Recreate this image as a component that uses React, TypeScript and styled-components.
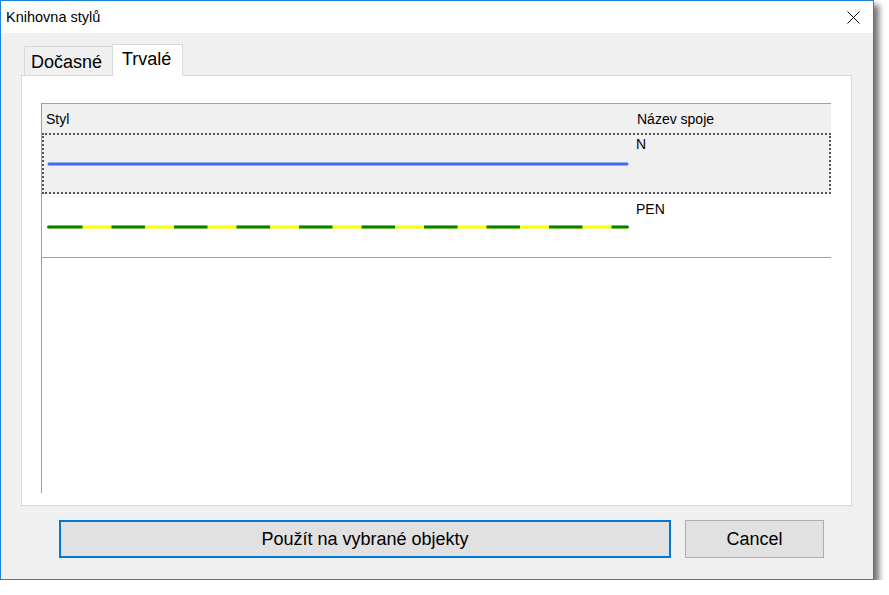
import React from "react";
import styled, { createGlobalStyle } from "styled-components";

const Global = createGlobalStyle`
  html, body { margin: 0; padding: 0; background: #ffffff; }
  body { font-family: "Liberation Sans", Arial, sans-serif; color: #000; }
  * { box-sizing: border-box; }
`;

const Window = styled.div`
  width: 874px;
  height: 580px;
  border: 1px solid #1c84d8;
  display: flex;
  flex-direction: column;
  background: #f0f0f0;
  box-shadow: 5px 5px 6px rgba(0, 0, 0, 0.55);
`;

const TitleBar = styled.div`
  height: 32px;
  background: #ffffff;
  display: flex;
  align-items: center;
  justify-content: space-between;
  padding-left: 5px;
`;

const Title = styled.span`
  font-size: 14.5px;
  color: #000;
  margin-top: -1px;
`;

const CloseButton = styled.div`
  width: 40px;
  height: 32px;
  display: flex;
  align-items: center;
  justify-content: center;
`;

const Body = styled.div`
  flex: 1;
  display: flex;
  flex-direction: column;
  padding: 11px 21px 0 20px;
`;

const TabStrip = styled.div`
  display: flex;
  align-items: flex-end;
  padding-left: 3px;
  height: 31px;
  position: relative;
  z-index: 1;
`;

const Tab = styled.div<{ $active?: boolean; $w: number }>`
  width: ${(p) => p.$w}px;
  font-size: 18px;
  display: flex;
  align-items: center;
  border: 1px solid #d9d9d9;
  border-bottom: none;
  background: ${(p) => (p.$active ? "#ffffff" : "#f0f0f0")};
  height: ${(p) => (p.$active ? "32px" : "29px")};
  margin-bottom: ${(p) => (p.$active ? "-1px" : "0")};
  padding: ${(p) => (p.$active ? "0 0 3px 9px" : "2px 0 0 6px")};
  ${(p) => (p.$active ? "" : "border-right: none;")}
`;

const Panel = styled.div`
  width: 831px;
  height: 431px;
  background: #ffffff;
  border: 1px solid #d9d9d9;
  padding: 27px 20px 12px 19px;
`;

const List = styled.div`
  width: 790px;
  height: 390px;
  border-top: 1px solid #a0a0a0;
  border-left: 1px solid #a0a0a0;
  display: flex;
  flex-direction: column;
`;

const Header = styled.div`
  height: 29px;
  background: #f0f0f0;
  display: grid;
  grid-template-columns: 590px 1fr;
  align-items: center;
  font-size: 14px;
`;

const HeaderCell = styled.div<{ $pad: number }>`
  padding-left: ${(p) => p.$pad}px;
`;

const Row = styled.div<{ $selected?: boolean; $h: number }>`
  height: ${(p) => p.$h}px;
  display: grid;
  grid-template-columns: 588px 1fr;
  background: ${(p) => (p.$selected ? "#f0f0f0" : "#ffffff")};
  border: 2px dotted ${(p) => (p.$selected ? "#555555" : "transparent")};
  font-size: 14px;
`;

const LineCell = styled.div<{ $shift: number }>`
  display: flex;
  align-items: center;
  padding-left: 2px;
  padding-top: ${(p) => p.$shift}px;
`;

const NameCell = styled.div<{ $top: number }>`
  padding-left: 4px;
  padding-top: ${(p) => p.$top}px;
  line-height: 16px;
`;

const Separator = styled.div`
  height: 1px;
  background: #a0a0a0;
`;

const Footer = styled.div`
  display: flex;
  gap: 14px;
  padding: 14px 0 0 38px;
`;

const Button = styled.div<{ $w: number; $default?: boolean }>`
  width: ${(p) => p.$w}px;
  height: 38px;
  background: #e1e1e1;
  border: ${(p) => (p.$default ? "2px solid #0078d7" : "1px solid #adadad")};
  display: flex;
  align-items: center;
  justify-content: center;
  font-size: 18px;
  color: #000;
`;

const SolidLine = () => (
  <svg width="584" height="6">
    <line x1="3" y1="3" x2="581" y2="3" stroke="#3d68fb" strokeWidth="3" strokeLinecap="round" />
  </svg>
);

const DashedLine = () => (
  <svg width="584" height="6">
    <line x1="3" y1="3" x2="581" y2="3" stroke="#ffff00" strokeWidth="3" />
    <line
      x1="3"
      y1="3"
      x2="581"
      y2="3"
      stroke="#008000"
      strokeWidth="3"
      strokeDasharray="33.5 29"
    />
    <circle cx="2.5" cy="3" r="1.5" fill="#008000" />
    <circle cx="581.5" cy="3" r="1.5" fill="#008000" />
  </svg>
);

export default function App() {
  return (
    <>
      <Global />
      <Window>
        <TitleBar>
          <Title>Knihovna stylů</Title>
          <CloseButton>
            <svg width="13" height="13" viewBox="0 0 13 13">
              <path d="M0.5 0.5 L12.5 12.5 M12.5 0.5 L0.5 12.5" stroke="#000" strokeWidth="1" />
            </svg>
          </CloseButton>
        </TitleBar>
        <Body>
          <TabStrip>
            <Tab $w={88}>Dočasné</Tab>
            <Tab $active $w={71}>
              Trvalé
            </Tab>
          </TabStrip>
          <Panel>
            <List>
              <Header>
                <HeaderCell $pad={4}>Styl</HeaderCell>
                <HeaderCell $pad={5}>Název spoje</HeaderCell>
              </Header>
              <Row $selected $h={61}>
                <LineCell $shift={0}>
                  <SolidLine />
                </LineCell>
                <NameCell $top={1}>N</NameCell>
              </Row>
              <Row $h={63}>
                <LineCell $shift={3}>
                  <DashedLine />
                </LineCell>
                <NameCell $top={5}>PEN</NameCell>
              </Row>
              <Separator />
            </List>
          </Panel>
          <Footer>
            <Button $w={612} $default>
              Použít na vybrané objekty
            </Button>
            <Button $w={139}>Cancel</Button>
          </Footer>
        </Body>
      </Window>
    </>
  );
}
